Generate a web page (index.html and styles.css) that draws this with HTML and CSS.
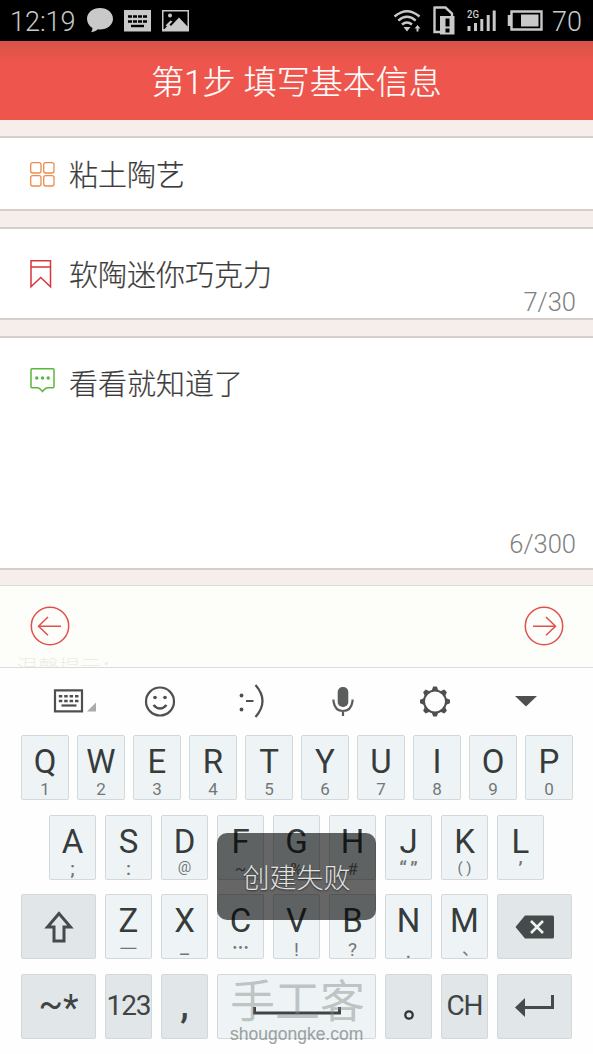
FILE: index.html
```html
<!DOCTYPE html>
<html lang="zh-CN">
<head>
<meta charset="utf-8">
<title>填写基本信息</title>
<link rel="stylesheet" href="styles.css">
</head>
<body>
<div class="screen">
  <div class="status">
    <span class="time">12:19</span>
    <svg class="status-left" width="106" height="41" viewBox="84 0 106 41">
      <g fill="#c9c9c9">
        <path d="M100 8c7.300 0 13 4.600 13 10.800S107.300 29.500 100 29.500c-1 0-1.500 0-2.300-.2-1.500 1.700-3.700 2.700-6.700 2.900 1-1.200 1.400-2.400 1.400-4.200C89 26 87 22.700 87 18.800 87 12.600 92.700 8 100 8z"/>
        <path d="M124 10h27v21.500h-27z"/>
        <path d="M162 10h27v21.500h-27z"/>
      </g>
      <g stroke="#000" fill="none">
        <path d="M128 16.500h19M128 21.500h19" stroke-width="2.600" stroke-dasharray="4 1"/>
        <path d="M131 26h13" stroke-width="2.400"/>
      </g>
      <path d="M163.500 11.500h24v15l-8.500-9-8 8.500-2-2-4.500 5h-1z"/>
      <circle cx="170" cy="15.500" r="2" fill="#c9c9c9"/>
      <path d="M165.500 25.500l5-5 2 1-5 5z" fill="#c9c9c9"/>
    </svg>
    <svg class="status-right" width="150" height="41" viewBox="392 0 150 41">
      <g fill="none" stroke="#c9c9c9" stroke-width="2.400">
        <path d="M394.500 16.500q12.500-10.500 25 0M398.300 20.600q8.700-7.500 17.400 0M402 24.500q5-4.200 10 0"/>
        <path d="M434.500 7.500h11l6.500 6v3M434.500 6.500v25.500h6"/>
        <path d="M511.500 11.500h30v18h-30z"/>
        <path d="M509.500 15v11" stroke-width="3.500"/>
      </g>
      <g fill="#c9c9c9">
        <path d="M403.500 27h7l-3.500 4.500zM417.500 25l3 3.500h-2v3h-2v-3h-2z"/>
        <path d="M440 16h14.500v18.500H440z"/>
        <path d="M521 14.500h17.500v12H521z"/>
        <path d="M467.500 26h3v5h-3zM474 23h3v8h-3zM480.300 19h3v12h-3zM486.700 15h3v16h-3zM492.700 10.500h3V31h-3z"/>
      </g>
      <path d="M445.500 18.500h4v8h-4zM445.500 28.500h4v4h-4z"/>
      <text class="net" x="467" y="18" textLength="12" lengthAdjust="spacingAndGlyphs">2G</text>
    </svg>
    <span class="level">70</span>
  </div>

  <div class="header">第1步 填写基本信息</div>

  <div class="form">
    <div class="card card-category">
      <svg class="icon" width="27" height="27" viewBox="0 0 27 27" fill="none" stroke="#ec8c4c" stroke-width="1.300">
        <rect x="1.700" y="1.700" width="10.300" height="10.300" rx="2"/><rect x="14.700" y="1.700" width="10.300" height="10.300" rx="2"/>
        <rect x="1.700" y="14.700" width="10.300" height="10.300" rx="2"/><rect x="14.700" y="14.700" width="10.300" height="10.300" rx="2"/>
      </svg>
      <span class="value">粘土陶艺</span>
    </div>
    <div class="card card-title">
      <svg class="icon" width="27" height="30" viewBox="0 0 27 30" fill="none" stroke="#d8363c" stroke-width="1.500">
        <path d="M2 1.800h19.500v26L11.700 18.500 2 27.800zM2 8h19.500"/>
      </svg>
      <span class="value">软陶迷你巧克力</span>
      <span class="count">7/30</span>
    </div>
    <div class="card card-intro">
      <svg class="icon" width="27" height="27" viewBox="0 0 27 27" fill="none" stroke="#58b838" stroke-width="1.500">
        <path d="M3 1.800h21q1 0 1 1v17q0 1-1 1h-5.500q-2 0-5 3.800-3-3.800-5-3.800H3q-1 0-1-1v-17q0-1 1-1z"/>
        <g fill="#58b838" stroke="none"><circle cx="7.800" cy="11" r="1.700"/><circle cx="13.500" cy="11" r="1.700"/><circle cx="19.200" cy="11" r="1.700"/></g>
      </svg>
      <span class="value">看看就知道了</span>
      <span class="count">6/300</span>
    </div>
  </div>

  <div class="pager">
    <svg width="40" height="40" viewBox="0 0 40 40" fill="none" stroke="#e0504c" stroke-width="1.500"><circle cx="20" cy="20" r="18.700"/><path d="M31 20.200H8.500M18 11L8.500 20.200 18 29.200"/></svg>
    <svg width="40" height="40" viewBox="0 0 40 40" fill="none" stroke="#e0504c" stroke-width="1.500"><circle cx="20" cy="20" r="18.700"/><path d="M9 20.200h22.500M22 11l9.500 9.200L22 29.200"/></svg>
    <div class="hint">温馨提示：</div>
  </div>

  <div class="keyboard">
    <div class="tools">
      <svg width="44" height="36" viewBox="0 0 44 36">
        <g fill="none" stroke="#4e5050"><path d="M3 8.300h27v21H3z" stroke-width="2.200"/><path d="M6.800 14.200h20M6.800 19h20" stroke-width="2.500" stroke-dasharray="3.500 1.900"/><path d="M9.500 23.500h15" stroke-width="2.200"/></g>
        <path d="M44 20.500v9h-9z" fill="#aaa"/>
      </svg>
      <svg width="36" height="36" viewBox="0 0 36 36" fill="none" stroke="#4e5050" stroke-width="2.200">
        <circle cx="18" cy="18.500" r="14"/><path d="M11.500 22q6.500 7 13 0" stroke-width="2.500"/>
        <g fill="#4e5050" stroke="none"><circle cx="13" cy="14.500" r="1.800"/><circle cx="23" cy="14.500" r="1.800"/></g>
      </svg>
      <svg width="36" height="36" viewBox="0 0 36 36" fill="none" stroke="#4e5050" stroke-width="2.200">
        <g fill="#4e5050" stroke="none"><circle cx="7.500" cy="12.500" r="1.900"/><circle cx="7.500" cy="26.500" r="1.900"/></g>
        <path d="M12 18h7.500M21.500 2q14 16 0 32"/>
      </svg>
      <svg width="36" height="36" viewBox="0 0 36 36" fill="none" stroke="#5b5d5d" stroke-width="2.200">
        <rect x="12.700" y="4" width="10.600" height="20" rx="5" fill="#5b5d5d" stroke="none"/>
        <path d="M8.500 16.500v2q1.500 9.500 9.500 9.500t9.500-9.500v-2M18 28v5"/>
      </svg>
      <svg width="36" height="36" viewBox="0 0 36 36" fill="none" stroke="#4e5050">
        <circle cx="18" cy="18.500" r="11" stroke-width="2"/>
        <g fill="#4e5050" stroke="none">
          <path id="tooth" d="M14.500 8l1.700-4.500h3.600L21.500 8z"/>
          <use href="#tooth" transform="rotate(45 18 18.500)"/><use href="#tooth" transform="rotate(90 18 18.500)"/><use href="#tooth" transform="rotate(135 18 18.500)"/><use href="#tooth" transform="rotate(180 18 18.500)"/><use href="#tooth" transform="rotate(225 18 18.500)"/><use href="#tooth" transform="rotate(270 18 18.500)"/><use href="#tooth" transform="rotate(315 18 18.500)"/>
        </g>
      </svg>
      <svg width="36" height="36" viewBox="0 0 36 36"><path d="M7 13h22L18 23.500z" fill="#4e5050"/></svg>
    </div>

    <div class="row row-top">
      <div class="key"><b>Q</b><i>1</i></div><div class="key"><b>W</b><i>2</i></div><div class="key"><b>E</b><i>3</i></div><div class="key"><b>R</b><i>4</i></div><div class="key"><b>T</b><i>5</i></div><div class="key"><b>Y</b><i>6</i></div><div class="key"><b>U</b><i>7</i></div><div class="key"><b>I</b><i>8</i></div><div class="key"><b>O</b><i>9</i></div><div class="key"><b>P</b><i>0</i></div>
    </div>
    <div class="row row-home">
      <div class="key"><b>A</b><i class="colon">;</i></div><div class="key"><b>S</b><i class="colon">:</i></div><div class="key"><b>D</b><i class="at">@</i></div><div class="key"><b>F</b><i>~</i></div><div class="key"><b>G</b><i>%</i></div><div class="key"><b>H</b><i>#</i></div><div class="key"><b>J</b><i class="quote">“ ”</i></div><div class="key"><b>K</b><i class="paren">( )</i></div><div class="key"><b>L</b><i class="quote">’</i></div>
    </div>
    <div class="row">
      <div class="key wide dark">
        <svg width="32" height="34" viewBox="0 0 32 34" fill="none" stroke="#454a4c" stroke-width="3"><path d="M16 3.500L4.500 17H11v14h10V17h6.500z"/></svg>
      </div>
      <div class="key"><b>Z</b><i class="cjk dash">—</i></div><div class="key"><b>X</b><i class="under">_</i></div><div class="key"><b>C</b><i class="cjk dots">…</i></div><div class="key"><b>V</b><i class="low">!</i></div><div class="key"><b>B</b><i class="low">?</i></div><div class="key"><b>N</b><i class="dot">.</i></div><div class="key"><b>M</b><i class="cjk pause">、</i></div>
      <div class="key wide dark">
        <svg width="42" height="26" viewBox="0 0 42 26"><path d="M1.500 13L11 1.500h27.500q1.500 0 1.500 1.500v20q0 1.500-1.500 1.500H11z" fill="#454a4a"/><path d="M17 7l12 12M29 7L17 19" stroke="#eef1f2" stroke-width="2.600"/></svg>
      </div>
    </div>
    <div class="row">
      <div class="key wide dark"><span class="label symbols">~<span class="star">*</span></span></div>
      <div class="key dark"><span class="label num">123</span></div>
      <div class="key dark"><span class="label comma">,</span></div>
      <div class="key space"><svg width="90" height="14" viewBox="0 0 90 14" fill="none" stroke="#3f4343"><path d="M2.500 2v6h85V2" stroke-width="3"/></svg></div>
      <div class="key dark"><svg class="stop" width="12" height="12" viewBox="0 0 12 12" fill="none" stroke="#303434" stroke-width="2.300"><circle cx="6" cy="6" r="3.700"/></svg></div>
      <div class="key dark"><span class="label lang">CH</span></div>
      <div class="key wide dark">
        <svg width="42" height="26" viewBox="0 0 42 26"><path d="M8 14.500h30.500V2" fill="none" stroke="#454a4a" stroke-width="3"/><path d="M1 14.500L11 5v19z" fill="#454a4a"/></svg>
      </div>
    </div>
  </div>

  <div class="toast">创建失败</div>
  <div class="watermark"><span class="brand">手工客</span><span class="site">shougongke.com</span></div>
</div>
</body>
</html>
```
FILE: styles.css
```css
* { box-sizing: border-box; }
body { margin: 0; }
.screen {
  position: relative;
  width: 593px;
  height: 1054px;
  overflow: hidden;
  background: #f6eeeb;
  font-family: Roboto, "Noto Sans CJK SC", sans-serif;
  font-weight: 300;
}
svg { display: block; flex: none; }

.status {
  display: flex;
  align-items: center;
  height: 41px;
  padding: 0 10px;
  background: #000;
  color: #c9c9c9;
  font-size: 27px;
}
.time { width: 74px; padding-top: 2px; }
.status-right { margin-left: auto; width: 152px; }
.level { width: 40px; padding: 2px 0 0 9px; }
.net { font: 500 11px Roboto, sans-serif; fill: #c9c9c9; }

.header {
  height: 79px;
  padding-top: 3px;
  background: linear-gradient(#d55347, #ee554c 21px);
  color: #fff;
  font-size: 33px;
  line-height: 77px;
  text-align: center;
  -webkit-text-stroke: .2px #fff;
}

.form {
  display: flex;
  flex-direction: column;
  gap: 16px;
  padding: 16px 0 15px;
}
.card {
  display: flex;
  align-items: flex-start;
  position: relative;
  padding-left: 29px;
  background: #fff;
  border-top: 2px solid #d5ceca;
  border-bottom: 2px solid #d5ceca;
}
.card-category { height: 75px; padding-top: 23px; }
.card-title { height: 93px; padding-top: 30px; }
.card-intro { height: 234px; padding-top: 29px; }
.value {
  margin: -5px 0 0 13px;
  color: #3c3c3c;
  font-size: 29px;
  line-height: 40px;
  -webkit-text-stroke: .2px #3c3c3c;
}
.card-title .value { margin-top: -3px; }
.card-intro .value { margin-top: -2px; }
.count {
  position: absolute;
  right: 17px;
  bottom: -1px;
  color: #808080;
  font-size: 25.500px;
  line-height: 34px;
}
.card-intro .count { bottom: 7px; }

.pager {
  display: flex;
  justify-content: space-between;
  position: relative;
  height: 82px;
  padding: 20px 29px 0 30px;
  overflow: hidden;
  background: #fdfdfa;
  border-top: 1px solid #dedcda;
}
.hint {
  position: absolute;
  left: 17px;
  top: 69px;
  color: #eeece4;
  font-size: 21px;
  line-height: 26px;
}

.keyboard {
  display: flex;
  flex-direction: column;
  gap: 15px;
  height: 387px;
  padding: 0 21px;
  background: #fefefe;
  border-top: 1px solid #dcdcdc;
}
.tools {
  display: flex;
  justify-content: space-between;
  height: 52px;
  padding: 15px 28px 0 32px;
}
.tools svg:first-child { margin: -1px -9px 0 -1px; }
.row { display: flex; gap: 9px; height: 64.500px; }
.row-top { gap: 8px; }
.row-home { padding-left: 28px; }
.key {
  display: flex;
  flex: none;
  flex-direction: column;
  align-items: center;
  width: 47px;
  height: 65px;
  padding-top: 6px;
  background: #eef4f5;
  border: 1px solid #d3d9d8;
  border-radius: 2px;
}
.row-top .key { width: 48px; }
.key b { color: #363b3b; font-size: 33px; font-weight: 400; line-height: 40px; }
.key i {
  margin-top: -3px;
  color: #737777;
  font-size: 17px;
  font-style: normal;
  font-weight: 400;
  line-height: 20px;
  white-space: pre;
}
.key .colon { font-size: 19px; font-weight: 500; }
.key .at { font-size: 15px; margin-top: -5px; }
.key .quote { font-size: 20px; font-weight: 500; margin-top: -3px; word-spacing: -2px; }
.key .paren { font-size: 15px; margin-top: -4px; }
.key .cjk { font-family: "Noto Sans CJK SC", sans-serif; }
.key .dash { margin-top: -5px; font-size: 20px; }
.key .dots { margin-top: -4px; font-weight: 700; }
.key .under { margin-top: -5px; font-size: 20px; }
.key .low { margin-top: -1px; font-size: 19px; }
.key .dot { margin-top: 0; font-size: 22px; }
.key .pause { padding-left: 12px; }
.key.dark { background: #e1e6e9; justify-content: center; padding-top: 0; }
.key.wide { width: 75px; }
.key.space { width: 159px; padding-top: 30px; }
.label { color: #3f4444; font-weight: 400; line-height: 40px; }
.symbols { display: flex; font-size: 36px; }
.star { margin-top: 4px; }
.num { font-size: 28px; letter-spacing: -1px; }
.comma { margin-top: -4px; font-size: 38px; font-weight: 500; }
.lang { font-size: 28px; letter-spacing: -1px; }
.stop { margin-top: 17px; }

.toast {
  position: absolute;
  left: 217px;
  top: 833px;
  width: 159px;
  height: 87px;
  padding-top: 3px;
  border-radius: 10px;
  background: rgba(0, 0, 0, .6);
  color: #e2e2e2;
  font-size: 27px;
  line-height: 87px;
  text-align: center;
  text-shadow: 0 1px 2px rgba(0, 0, 0, .6);
}
.watermark {
  display: flex;
  flex-direction: column;
  position: absolute;
  left: 230px;
  top: 980px;
  color: rgba(130, 135, 135, .45);
  font-weight: 400;
}
.brand { font-size: 45px; line-height: 46px; }
.site {
  color: rgba(120, 125, 125, .68);
  font: 17.500px/17px "Liberation Sans", sans-serif;
  -webkit-text-stroke: .2px rgba(120, 125, 125, .6);
}
```
